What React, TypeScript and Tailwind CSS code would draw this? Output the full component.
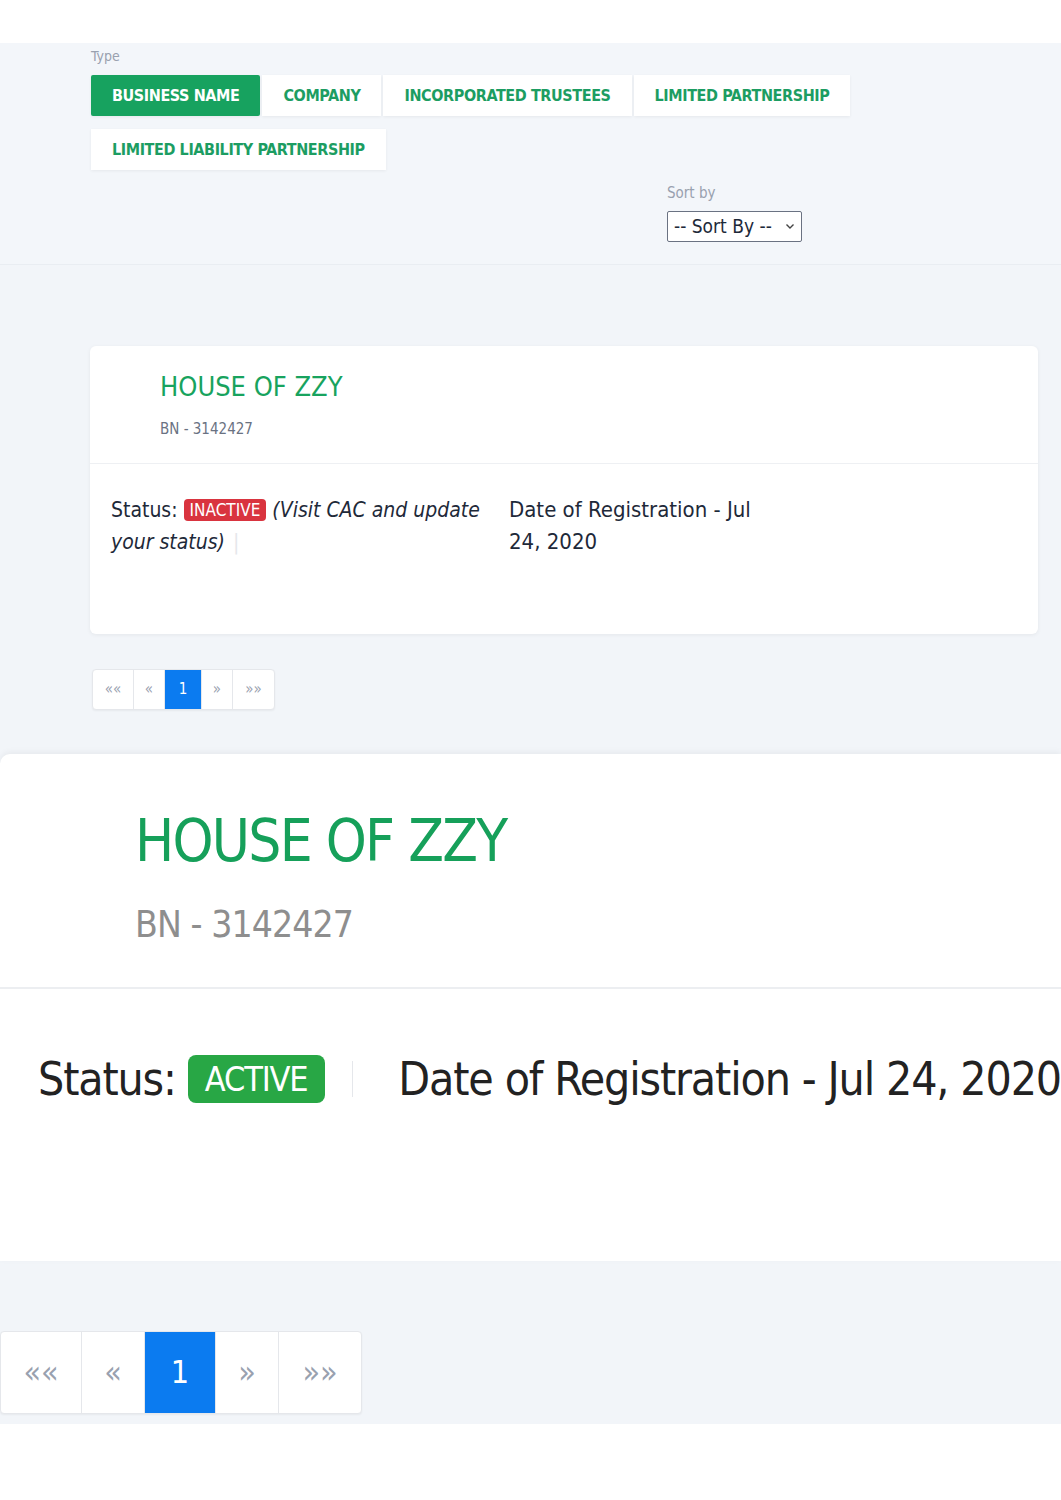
import { ReactNode } from "react";

const font = { fontFamily: "'DejaVu Sans Condensed', Roboto, sans-serif" };

const tabs = ["BUSINESS NAME", "COMPANY", "INCORPORATED TRUSTEES", "LIMITED PARTNERSHIP"];

function Tab({ label, active }: { label: string; active?: boolean }) {
  return (
    <button
      className={
        "h-[41px] px-[21px] text-[16px] font-semibold tracking-tight shadow-[0_1px_3px_rgba(0,0,0,0.06)] " +
        (active ? "rounded-[2px] bg-[#17a25f] text-white" : "bg-white text-[#1c9d62]")
      }
    >
      {label}
    </button>
  );
}

function Pager({ big }: { big?: boolean }) {
  const cells: { t: ReactNode; w: string; active?: boolean }[] = big
    ? [
        { t: "««", w: "w-[80px]" },
        { t: "«", w: "w-[63px]" },
        { t: "1", w: "w-[71px]", active: true },
        { t: "»", w: "w-[63px]" },
        { t: "»»", w: "w-[83px]" },
      ]
    : [
        { t: "««", w: "w-[40px]" },
        { t: "«", w: "w-[31px]" },
        { t: "1", w: "w-[37px]", active: true },
        { t: "»", w: "w-[31px]" },
        { t: "»»", w: "w-[42px]" },
      ];
  return (
    <div
      className={
        "flex rounded-[4px] border border-gray-200 bg-white shadow-[0_1px_2px_rgba(0,0,0,0.05)] " +
        (big ? "h-[83px] text-[32px]" : "h-[41px] text-[15px]")
      }
    >
      {cells.map((c, i) => (
        <div
          key={i}
          className={
            "flex items-center justify-center " +
            c.w +
            (i > 0 ? " border-l border-gray-200" : "") +
            (c.active ? " bg-[#0b7bf0] text-white" : " text-gray-400")
          }
        >
          {c.t}
        </div>
      ))}
    </div>
  );
}

export default function App() {
  return (
    <div className="w-[1061px] overflow-hidden bg-white" style={font}>
      <div className="h-[43px] bg-white" />

      {/* filters */}
      <div className="border-b border-[#e9edf2] bg-[#f3f6fa] pl-[91px] pt-[3px] pb-[22px]">
        <div className="text-[14px] text-gray-400">Type</div>
        <div className="mt-[8px] flex gap-[2px]">
          {tabs.map((t, i) => (
            <Tab key={t} label={t} active={i === 0} />
          ))}
        </div>
        <div className="mt-[13px] flex">
          <Tab label="LIMITED LIABILITY PARTNERSHIP" />
        </div>
        <div className="ml-[576px] mt-[12px]">
          <div className="text-[15px] text-gray-400">Sort by</div>
          <div className="mt-[6px] flex h-[31px] w-[135px] items-center justify-between rounded-[2px] border border-gray-500 bg-white pl-[6px] pr-[6px] text-[19px] text-gray-800">
            <span>-- Sort By --</span>
            <svg width="10" height="8" viewBox="0 0 10 8" fill="none" stroke="#444" strokeWidth="1.4">
              <path d="M1.5 2.5 5 6 8.5 2.5" />
            </svg>
          </div>
        </div>
      </div>

      {/* small result */}
      <div className="bg-[#f2f5f9] pl-[90px] pr-[23px] pt-[81px] pb-[44px]">
        <div className="rounded-[6px] bg-white shadow-[0_1px_4px_rgba(0,0,0,0.06)]">
          <div className="h-[118px] border-b border-[#eef0f3] pl-[70px] pt-[24px]">
            <div className="text-[27px] leading-[34px] text-[#18a35e]">HOUSE OF ZZY</div>
            <div className="mt-[14px] text-[15px] text-gray-500">BN - 3142427</div>
          </div>
          <div className="flex h-[170px] pl-[21px] pt-[30px] text-[21px] leading-[32px] text-gray-800">
            <div className="w-[398px] pr-[10px]">
              Status:{" "}
              <span className="inline-block rounded-[4px] bg-[#d9343f] px-[6px] align-[1px] text-[17px] leading-[22px] text-white">
                INACTIVE
              </span>{" "}
              <i>(Visit CAC and update your status)</i>
              <span className="ml-[8px] text-gray-200">|</span>
            </div>
            <div className="w-[255px] text-[22px]">Date of Registration - Jul 24, 2020</div>
          </div>
        </div>
        <div className="mt-[35px] ml-[2px] flex">
          <Pager />
        </div>
      </div>

      {/* zoomed result */}
      <div className="bg-[#f2f5f9]">
        <div className="h-[507px] rounded-tl-[10px] bg-white shadow-[0_-2px_6px_rgba(0,0,0,0.05)]">
          <div className="h-[235px] border-b-2 border-[#eceef1] pl-[135px] pt-[52px]">
            <div className="text-[58px] leading-[70px] tracking-[-0.03em] text-[#16a05a]">HOUSE OF ZZY</div>
            <div className="mt-[26px] text-[37px] leading-[46px] tracking-[-0.025em] text-[#8e8e8e]">BN - 3142427</div>
          </div>
          <div className="flex items-center whitespace-nowrap pl-[38px] pt-[60px] text-[46px] leading-[60px] tracking-[-0.025em] text-[#222]">
            <span>Status:</span>
            <span className="ml-[12px] flex h-[48px] items-center rounded-[8px] bg-[#28a745] px-[17px] text-[34px] text-white">
              ACTIVE
            </span>
            <span className="ml-[27px] h-[36px] w-[2px] bg-gray-200" />
            <span className="ml-[45px]">Date of Registration - Jul 24, 2020</span>
          </div>
        </div>
        <div className="flex pt-[70px] pb-[10px]">
          <Pager big />
        </div>
      </div>
      <div className="h-[80px] bg-white" />
    </div>
  );
}
